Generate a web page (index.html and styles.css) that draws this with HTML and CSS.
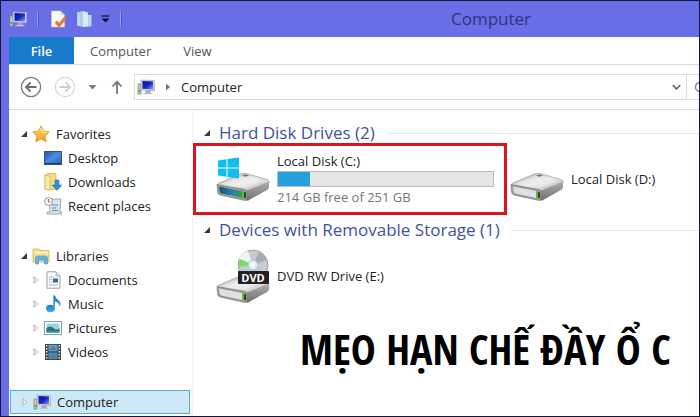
FILE: index.html
```html
<!DOCTYPE html>
<html lang="vi">
<head>
    <meta charset="UTF-8">
    <meta name="viewport" content="width=device-width, initial-scale=1.0">
    <title>Computer</title>
    <link rel="stylesheet" href="styles.css">
</head>
<body>
    <!-- Shared icons -->
    <svg class="symbols" aria-hidden="true">
        <defs>
            <linearGradient id="screen" x1="0" y1="0" x2="1" y2="1">
                <stop offset="0" stop-color="#0812a0"/>
                <stop offset="0.5" stop-color="#1622c4"/>
                <stop offset="1" stop-color="#7fa0f4"/>
            </linearGradient>
            <linearGradient id="driveTop" x1="0" y1="0" x2="1" y2="1">
                <stop offset="0" stop-color="#a9a9a9"/>
                <stop offset="0.5" stop-color="#ececec"/>
                <stop offset="1" stop-color="#b4b4b4"/>
            </linearGradient>
            <linearGradient id="driveSide" x1="0" y1="0" x2="0" y2="1">
                <stop offset="0" stop-color="#b0b0b0"/>
                <stop offset="1" stop-color="#6f6f6f"/>
            </linearGradient>
            <linearGradient id="driveBlue" x1="0" y1="0" x2="1" y2="0">
                <stop offset="0" stop-color="#174f74"/>
                <stop offset="0.6" stop-color="#2c83a8"/>
                <stop offset="1" stop-color="#2f9a52"/>
            </linearGradient>
            <linearGradient id="gold" x1="0" y1="0" x2="0" y2="1">
                <stop offset="0" stop-color="#ffe36b"/>
                <stop offset="1" stop-color="#f49a1c"/>
            </linearGradient>
            <linearGradient id="desk" x1="0" y1="0" x2="1" y2="1">
                <stop offset="0" stop-color="#1f55b0"/>
                <stop offset="0.5" stop-color="#4b8be0"/>
                <stop offset="1" stop-color="#2462bd"/>
            </linearGradient>
            <linearGradient id="note" x1="0" y1="0" x2="0" y2="1">
                <stop offset="0" stop-color="#1b78bd"/>
                <stop offset="1" stop-color="#45b4ea"/>
            </linearGradient>
        </defs>
        <symbol id="pc" viewBox="0 0 18 16">
            <rect x="1" y="5" width="3" height="10" fill="#c9ccb8" stroke="#7d806f" stroke-width="0.7"/>
            <rect x="1.6" y="11" width="1.6" height="2" fill="#5d9c3a"/>
            <path d="M4 1l13.500 0.500v10.500l-13.500-1z" fill="#d3d6dc" stroke="#9a9fa8" stroke-width="0.6"/>
            <path d="M5.500 2l10.500 0.500v8l-10.500-0.800z" fill="url(#screen)"/>
            <path d="M9 11.500h4l1 2.500h-6z" fill="#a8abb2"/>
            <path d="M6.500 14h9v1.300h-9z" fill="#c6c8cd"/>
        </symbol>
        <symbol id="drive" viewBox="0 0 54 28">
            <path d="M4 22l28 6l20-13v-2z" fill="#000" opacity="0.14"/>
            <path d="M1 12Q1 11 3 10L23 1.500Q26 0 30 0.500L51 6.500Q54 8 53 10L32 18z" fill="url(#driveTop)" stroke="#909090" stroke-width="0.6"/>
            <path d="M6 11L25 3.500Q28 2.500 31 3L47 8L30 14.500z" fill="#f0f0f0" opacity="0.6"/>
            <path d="M26 2.500l4-1l3 1l-4 1.200z" fill="#7b6f6f"/>
            <path d="M31 17.500L53 8.500V14Q53 16 51 17L33 27Q31 28 30 27z" fill="url(#driveSide)"/>
            <path d="M1 11.500L29 16.500Q31 17 31 19V25.500Q31 28 28 27.300L4 22Q2 21.500 1.500 19z" fill="#9a9a9a" stroke="#757575" stroke-width="0.6"/>
            <path d="M3 13.500L26 18V25L5.500 20.500Q4 20 3.600 18z" fill="#dfe0e3"/>
            <path d="M26 18l4 1v6.500l-4-0.600z" fill="#5cbd38"/>
            <path d="M28 19l2 0.500v5.500l-2-0.300z" fill="#23461c"/>
        </symbol>
        <symbol id="open" viewBox="0 0 8 8">
            <path d="M7 1v6H1z" fill="#3a3a3a"/>
        </symbol>
        <symbol id="closed" viewBox="0 0 8 10">
            <path d="M1.500 1l4.500 4l-4.500 4z" fill="#fff" stroke="#9a9a9a"/>
        </symbol>
    </svg>

    <header class="title-bar">
        <div class="quick-access">
            <svg class="icon" viewBox="0 0 18 16"><use href="#pc"/></svg>
            <span class="divider"></span>
            <button class="tool" aria-label="Properties">
                <svg class="icon" viewBox="0 0 18 18">
                    <path d="M2.500 1h9l4 4v12h-13z" fill="#fbfaf8" stroke="#c9c4c0" stroke-width="0.6"/>
                    <path d="M11.500 1v4h4z" fill="#d9d5d2"/>
                    <path d="M7 11.500l3 4l6.500-8" fill="none" stroke="#ea7440" stroke-width="3"/>
                </svg>
            </button>
            <button class="tool" aria-label="New folder">
                <svg class="icon" viewBox="0 0 18 18">
                    <path d="M2 2l8-1v16l-8-1z" fill="#a9d0ee"/>
                    <path d="M8 1.500l5 1v14l-5 0.500z" fill="#d9ecf8"/>
                    <path d="M13 5h3.500v11.500h-3.500z" fill="#b5d5ee"/>
                    <path d="M4 4v11" stroke="#d5e9f7"/>
                </svg>
            </button>
            <button class="tool" aria-label="Customize">
                <svg class="caret" viewBox="0 0 9 8"><path d="M0.500 1h8" stroke="#0c0c28" stroke-width="1.200"/><path d="M0.500 3.500h8l-4 4z" fill="#0c0c28"/></svg>
            </button>
            <span class="divider"></span>
        </div>
        <h1 class="title">Computer</h1>
    </header>

    <nav class="tabs">
        <button class="tab tab-file">File</button>
        <button class="tab">Computer</button>
        <button class="tab">View</button>
    </nav>

    <div class="nav-bar">
        <button class="round" aria-label="Back">
            <svg viewBox="0 0 24 24"><circle cx="12" cy="12" r="10.500" fill="none" stroke="#7d7d7d" stroke-width="1.500"/><path d="M18 12H7M11.500 7l-5 5l5 5" fill="none" stroke="#6c6c6c" stroke-width="2"/></svg>
        </button>
        <button class="round" aria-label="Forward">
            <svg viewBox="0 0 24 24"><circle cx="12" cy="12" r="10.500" fill="none" stroke="#d8d8d8" stroke-width="1.300"/><path d="M6 12h11M12.500 7l5 5l-5 5" fill="none" stroke="#d0d0d0" stroke-width="2"/></svg>
        </button>
        <button class="tool" aria-label="Recent locations">
            <svg class="caret" viewBox="0 0 9 8"><path d="M0.500 2h8l-4 4.500z" fill="#7a7a7a"/></svg>
        </button>
        <button class="tool" aria-label="Up">
            <svg class="up" viewBox="0 0 12 14"><path d="M6 14V2M1.500 6.500L6 1.800l4.500 4.700" fill="none" stroke="#757575" stroke-width="1.800"/></svg>
        </button>
        <div class="address">
            <svg class="icon" viewBox="0 0 18 16"><use href="#pc"/></svg>
            <svg class="crumb" viewBox="0 0 6 8"><path d="M1 0.500l4 3.500l-4 3.500z" fill="#777"/></svg>
            <a class="path" href="#computer">Computer</a>
            <button class="tool" aria-label="Previous locations">
                <svg class="caret" viewBox="0 0 9 8"><path d="M0.800 2l3.700 4l3.700-4" fill="none" stroke="#6b6b6b" stroke-width="1.800"/></svg>
            </button>
        </div>
        <button class="search" aria-label="Search">
            <svg class="icon" viewBox="0 0 18 16"><circle cx="6" cy="8" r="4.500" fill="none" stroke="#888" stroke-width="1.500"/></svg>
        </button>
    </div>

    <div class="explorer">
        <aside class="sidebar">
            <ul class="tree">
                <li><a class="node" href="#favorites">
                    <svg class="arrow" viewBox="0 0 8 8"><use href="#open"/></svg>
                    <svg class="icon" viewBox="0 0 18 18"><path d="M9 0.800l2.500 5.400l5.800 0.700l-4.300 4l1.200 5.900L9 13.900l-5.200 2.900L5 10.900l-4.300-4l5.800-0.700z" fill="url(#gold)" stroke="#d98a25" stroke-width="0.8"/><path d="M9 3l1.500 4l4 0.500" fill="none" stroke="#fff3b0"/></svg>
                    Favorites</a></li>
                <li><a class="node child" href="#desktop">
                    <svg class="icon" viewBox="0 0 18 18"><rect x="0.500" y="2.500" width="17" height="13" fill="url(#desk)" stroke="#36517f"/><path d="M1 14.500h16" stroke="#183e78" stroke-width="1.200"/></svg>
                    Desktop</a></li>
                <li><a class="node child" href="#downloads">
                    <svg class="icon" viewBox="0 0 18 18"><path d="M1 2l3-1.500h8v16H1z" fill="#f0dc82" stroke="#c9ae4f" stroke-width="0.7"/><path d="M1 2l5 1.500v14L1 16z" fill="#f8ebae" stroke="#c9ae4f" stroke-width="0.6"/><path d="M11 7h4v5h3l-5 5.500l-5-5.500h3z" fill="#2d8fda" stroke="#1d6cb0" stroke-width="0.5"/></svg>
                    Downloads</a></li>
                <li><a class="node child" href="#recent">
                    <svg class="icon" viewBox="0 0 18 18"><path d="M5 2h12l-1 13h2v2H3v-2h3z" fill="#d7e3ea" stroke="#8b9ba6" stroke-width="0.8"/><path d="M8 8h6M8 11h4M8 13.500h6" stroke="#5e8fb0" stroke-width="1.200"/><circle cx="4.500" cy="4.500" r="4" fill="#f1f1f1" stroke="#8d8d8d" stroke-width="0.8"/><path d="M4.500 2v2.800h2" fill="none" stroke="#666" stroke-width="0.8"/></svg>
                    Recent places</a></li>
            </ul>
            <ul class="tree">
                <li><a class="node" href="#libraries">
                    <svg class="arrow" viewBox="0 0 8 8"><use href="#open"/></svg>
                    <svg class="icon" viewBox="0 0 18 18"><path d="M1 2h6l1 1.500h9V15H1z" fill="#f5e08c" stroke="#c7ae52" stroke-width="0.7"/><path d="M3 5.500h13" stroke="#fff7cd" stroke-width="1.500"/><path d="M3.500 17V11q0-2 2-2h8q2 0 2 2v6h-3v-4h-6v4z" fill="#64b5e4" stroke="#3f8fc4" stroke-width="0.6"/></svg>
                    Libraries</a></li>
                <li><a class="node child" href="#documents">
                    <svg class="arrow" viewBox="0 0 8 10"><use href="#closed"/></svg>
                    <svg class="icon" viewBox="0 0 18 18"><path d="M3 0.800h9l4 4v12.400H3z" fill="#fafafa" stroke="#999" stroke-width="0.9"/><path d="M12 1v4h4" fill="#ddd" stroke="#999" stroke-width="0.7"/><path d="M5 6h5M5 8.500h3M5 11h3M5 14h9" stroke="#9bb4cc" stroke-width="0.9"/><rect x="9" y="7.500" width="5" height="4" fill="#34699c"/></svg>
                    Documents</a></li>
                <li><a class="node child" href="#music">
                    <svg class="arrow" viewBox="0 0 8 10"><use href="#closed"/></svg>
                    <svg class="icon" viewBox="0 0 18 18"><ellipse cx="6.500" cy="13.500" rx="4.500" ry="3.700" fill="url(#note)"/><path d="M9.300 13.500V0.500h1.700q0.500 3 3.500 4.700q3.500 3 1 6.800q0.500-4-4.500-5.500v7z" fill="url(#note)"/></svg>
                    Music</a></li>
                <li><a class="node child" href="#pictures">
                    <svg class="arrow" viewBox="0 0 8 10"><use href="#closed"/></svg>
                    <svg class="icon" viewBox="0 0 18 18"><rect x="0.500" y="2.500" width="17" height="13" fill="#fff" stroke="#8f9ba3"/><rect x="2.500" y="4.500" width="13" height="9" fill="#9ad4ee"/><path d="M2.500 9q4-3 7 0t6 0v4.500h-13z" fill="#2c7764"/><path d="M2.500 12h13v1.500h-13z" fill="#3d92b8"/></svg>
                    Pictures</a></li>
                <li><a class="node child" href="#videos">
                    <svg class="arrow" viewBox="0 0 8 10"><use href="#closed"/></svg>
                    <svg class="icon" viewBox="0 0 18 18"><rect x="1" y="1" width="16" height="16" fill="#37454e"/><rect x="4.500" y="1.800" width="9" height="6.500" fill="#4da4dc"/><rect x="4.500" y="9.500" width="9" height="6.500" fill="#3b8dc8"/><path d="M5 7l4-4l4 4zM5 15l4-4l4 4z" fill="#8b6a5a"/><path d="M2.700 2v15M15.300 2v15" stroke="#e5e5e5" stroke-width="1.500" stroke-dasharray="1.500 1.500"/></svg>
                    Videos</a></li>
            </ul>
            <ul class="tree">
                <li><a class="node current" id="computer" href="#computer">
                    <svg class="arrow" viewBox="0 0 8 10"><use href="#closed"/></svg>
                    <svg class="icon" viewBox="0 0 18 16"><use href="#pc"/></svg>
                    Computer</a></li>
            </ul>
        </aside>

        <main class="content">
            <h2 class="group"><svg class="arrow" viewBox="0 0 8 8"><use href="#open"/></svg>Hard Disk Drives (2)</h2>
            <div class="drives">
                <div class="drive highlighted">
                    <svg class="drive-icon" viewBox="0 0 54 46">
                        <use href="#drive" y="17" width="54" height="28"/>
                        <path d="M3 30.500L26 35V42L5.500 37.500Q4 37 3.600 35z" fill="url(#driveBlue)"/>
                        <path d="M2 4.500l8.500-1.200v8.200H2zM11.500 3.100L23 1.500v10H11.500zM2 12.500h8.500v8.200L2 19.500zM11.500 12.500H23v10l-11.500-1.600z" fill="#12bdf0"/>
                    </svg>
                    <div class="details">
                        <label for="usage">Local Disk (C:)</label>
                        <meter class="usage" id="usage" min="0" max="251" value="37"></meter>
                        <span class="free">214 GB free of 251 GB</span>
                    </div>
                </div>
                <div class="drive">
                    <svg class="drive-icon" viewBox="0 0 54 46"><use href="#drive" y="17" width="54" height="28"/></svg>
                    <span>Local Disk (D:)</span>
                </div>
            </div>

            <h2 class="group"><svg class="arrow" viewBox="0 0 8 8"><use href="#open"/></svg>Devices with Removable Storage (1)</h2>
            <div class="drives">
                <div class="drive removable">
                    <svg class="drive-icon" viewBox="0 0 54 54">
                        <use href="#drive" y="26" width="54" height="28"/>
                        <circle cx="37" cy="16" r="15" fill="#c9cbce" stroke="#8f9296" stroke-width="0.8"/>
                        <path d="M37 16L23 10a15 15 0 0 1 9-8z" fill="#f3f3f3"/>
                        <path d="M37 16L22.500 18a15 15 0 0 1 2-8z" fill="#7fdc63"/>
                        <path d="M37 16L51 11a15 15 0 0 0-8-8.500z" fill="#aaacb0"/>
                        <circle cx="37" cy="16" r="5" fill="#e6eef2" stroke="#8ecbe0"/>
                        <circle cx="37" cy="16" r="2" fill="#fff"/>
                        <rect x="22" y="22" width="31" height="13" rx="1" fill="#222"/>
                        <text class="disc-label" x="37" y="33" text-anchor="middle">DVD</text>
                    </svg>
                    <span>DVD RW Drive (E:)</span>
                </div>
            </div>

            <p class="caption">MẸO HẠN CHẾ ĐẦY Ổ C</p>
        </main>
    </div>
</body>
</html>
```
FILE: styles.css
```css
* {
    box-sizing: border-box;
}

body {
    display: flex;
    flex-direction: column;
    min-height: 100vh;
    margin: 0;
    padding-left: 8px;
    border: 1px solid #17173a;
    background: #696ee6;
    color: #222;
    font-family: "Open Sans", "Noto Sans", sans-serif;
    font-size: 13px;
    line-height: 16px;
}

button {
    padding: 0;
    border: none;
    background: none;
    color: inherit;
    font: inherit;
    cursor: pointer;
}

a {
    color: inherit;
    text-decoration: none;
}

svg {
    display: block;
    flex-shrink: 0;
}

.symbols {
    position: absolute;
    width: 0;
    height: 0;
}

.icon {
    width: 18px;
    height: 18px;
}

.caret {
    width: 9px;
    height: 8px;
}

/* Title bar */
.title-bar {
    display: flex;
    align-items: center;
    height: 36px;
}

.quick-access {
    display: flex;
    flex: 1;
    align-items: center;
    gap: 8px;
}

.divider {
    width: 2px;
    height: 16px;
    margin: 0 2px;
    border-left: 1px solid #9a9ff2;
    border-right: 1px solid #5054b4;
}

.title {
    flex: 2;
    margin: 0;
    padding-left: 318px;
    color: #2e3480;
    font-size: 17px;
    font-weight: 400;
    line-height: 24px;
}

/* Ribbon tabs */
.tabs {
    display: flex;
    height: 28px;
    border-bottom: 1px solid #dcdcdc;
    background: #fff;
}

.tab {
    padding: 0 18px 0 14px;
    color: #555;
}

.tab-file {
    width: 65px;
    margin-right: 2px;
    padding: 0;
    background: #1979ca;
    color: #fff;
    font-weight: 600;
}

/* Navigation */
.nav-bar {
    display: flex;
    align-items: center;
    height: 45px;
    padding-left: 11px;
    border-bottom: 1px solid #dcdcdc;
    background: #fff;
    gap: 12px;
}

.round svg {
    width: 22px;
    height: 22px;
}

.up {
    width: 12px;
    height: 14px;
    margin: 0 2px;
}

.address {
    display: flex;
    flex: 1;
    align-items: center;
    height: 26px;
    margin-left: -3px;
    padding: 0 5px 0 2px;
    border: 1px solid #dcdcdc;
    gap: 10px;
}

.crumb {
    width: 6px;
    height: 8px;
}

.path {
    flex: 1;
}

.search {
    width: 12px;
    height: 26px;
    margin-left: -12px;
    padding-left: 7px;
    overflow: hidden;
    border: solid #dcdcdc;
    border-width: 1px 0;
}

/* Body */
.explorer {
    display: flex;
    flex: 1;
    background: #fff;
}

.sidebar {
    width: 184px;
    padding: 12px 2px 0 1px;
    border-right: 1px solid #f3f3f3;
}

.tree {
    margin: 0 0 26px;
    padding: 0;
    list-style: none;
}

.tree:last-child {
    margin: 0;
}

.node {
    display: flex;
    align-items: center;
    height: 24px;
    padding-left: 10px;
    gap: 6px;
}

.arrow {
    width: 8px;
    height: 8px;
}

.node .arrow {
    margin-right: -2px;
}

.child {
    padding-left: 22px;
}

.child .icon:first-child {
    margin-left: 12px;
}

.current {
    border: 1px solid #52b0d8;
    background: #cde8f6;
}

.content {
    flex: 1;
    min-width: 0;
    padding-top: 13px;
}

.group {
    display: flex;
    align-items: center;
    margin: 0;
    padding-left: 10px;
    color: #43529c;
    font-size: 17px;
    font-weight: 400;
    line-height: 20px;
    gap: 8px;
}

.group::after {
    flex: 1;
    height: 1px;
    margin-left: 4px;
    background: #e6e6e6;
    content: "";
}

.drives {
    display: flex;
    margin-bottom: 5px;
}

.drive {
    display: flex;
    flex: 1;
    align-items: center;
    height: 72px;
    padding-left: 3px;
    gap: 7px;
}

.highlighted {
    flex: 0 0 314px;
    padding: 0 10px 0 20px;
    border: 3px solid #d9141f;
}

.removable {
    padding-left: 23px;
}

.drive-icon {
    width: 54px;
}

.disc-label {
    fill: #fff;
    font-size: 11px;
    font-weight: 700;
}

.details {
    display: flex;
    flex: 1;
    flex-direction: column;
    gap: 2px;
}

.usage {
    display: block;
    width: 100%;
    height: 16px;
    appearance: none;
}

.usage::-webkit-meter-inner-element {
    display: block;
    position: static;
    height: 16px;
}

.usage::-webkit-meter-bar {
    position: static;
    height: 16px;
    margin: 0;
    border: 1px solid #bcbcbc;
    border-radius: 0;
    background: #e6e6e6;
    transform: none;
}

.usage::-webkit-meter-optimum-value {
    background: #26a0da;
}

.free {
    color: #777;
}

.caption {
    margin: 9px 0 0;
    padding-left: 107px;
    color: #000;
    font-family: "Open Sans Condensed", "Liberation Sans Narrow", "Roboto Condensed", sans-serif;
    font-size: 42px;
    font-weight: 700;
    line-height: 56px;
    white-space: nowrap;
}
```
